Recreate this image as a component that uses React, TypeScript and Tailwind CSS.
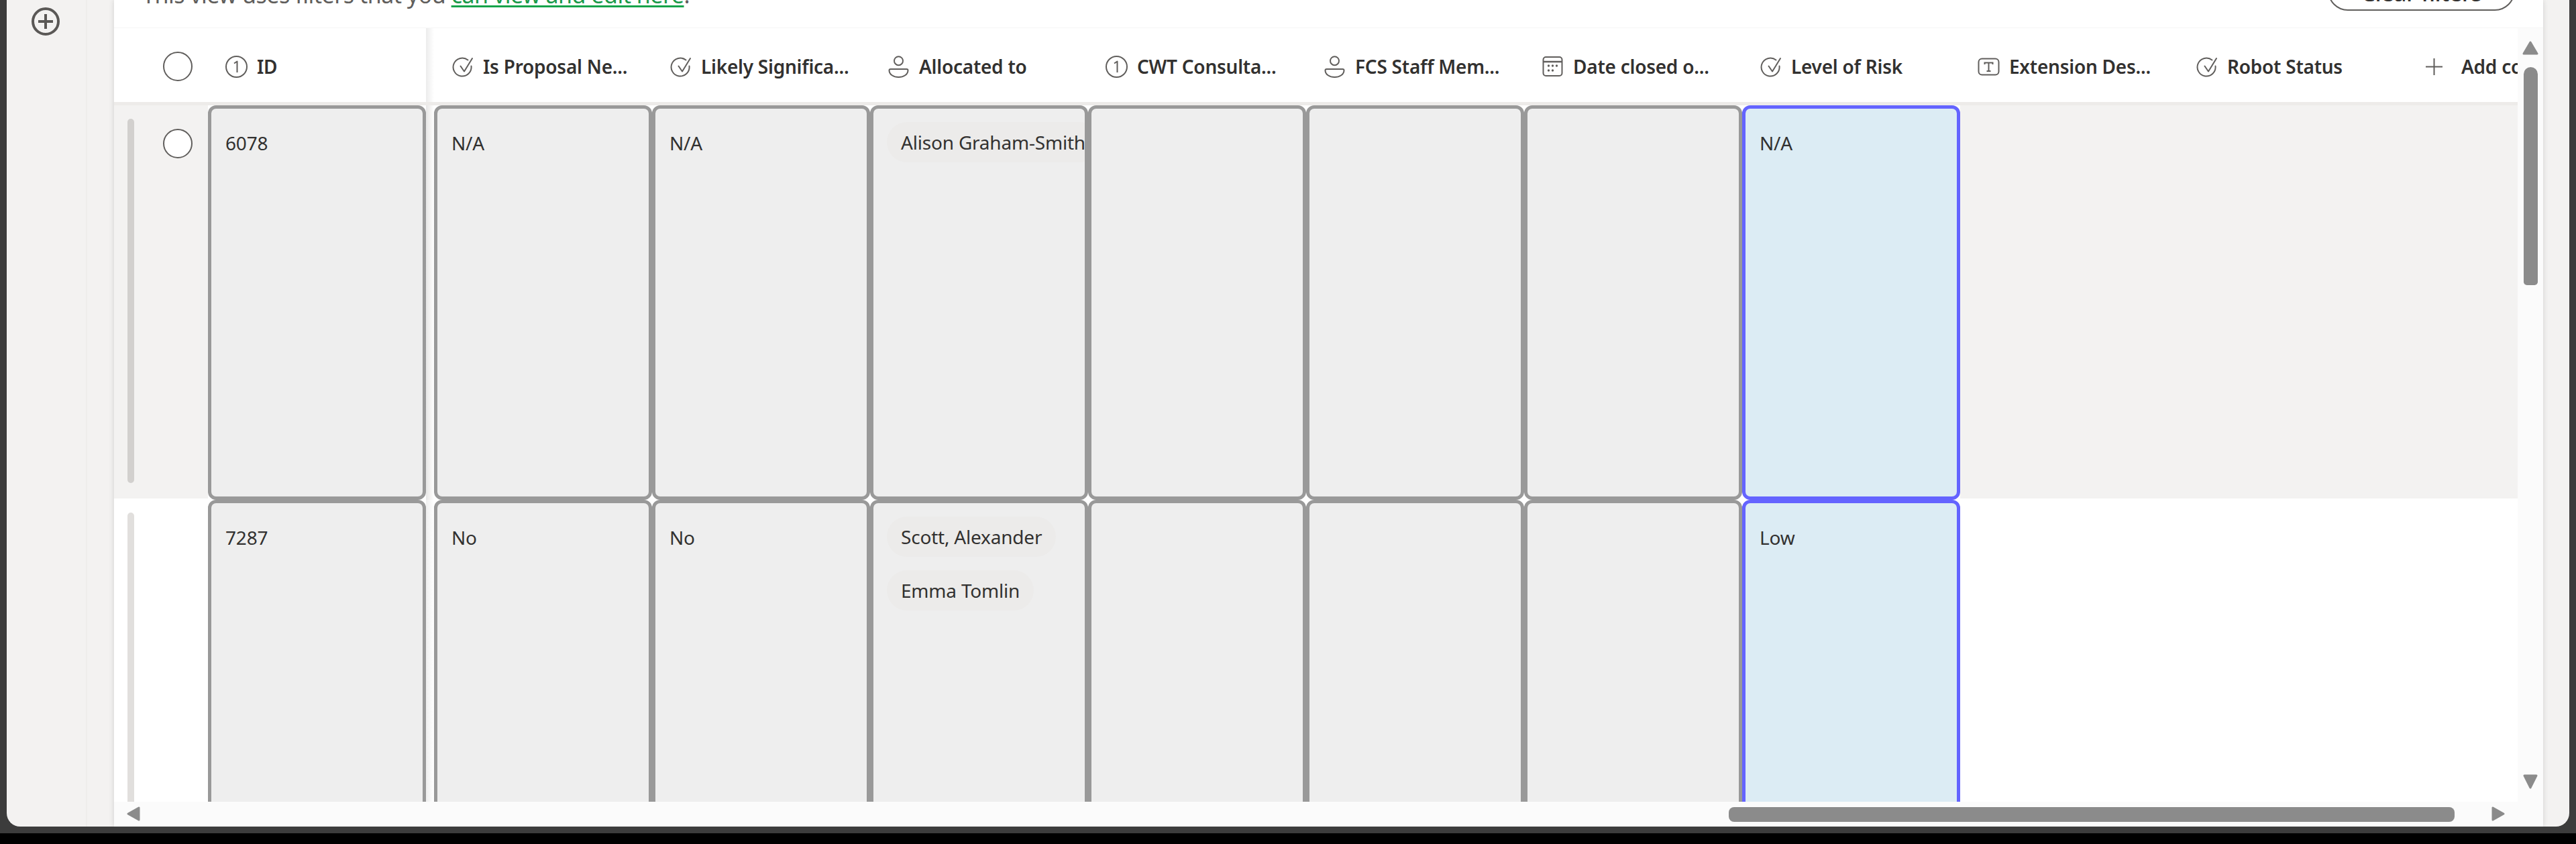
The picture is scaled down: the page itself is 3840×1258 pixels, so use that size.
import React from 'react';

const FONT = "font-['Noto_Sans','Liberation_Sans',sans-serif]";

const NumberIcon = () => (
  <svg width="33" height="33" viewBox="0 0 33 33" fill="none" stroke="#605e5c" strokeWidth="2">
    <circle cx="16.5" cy="16.5" r="15.5" />
    <path d="M13 11.5 L17.5 8.5 V25" strokeLinejoin="round" />
  </svg>
);

const CheckIcon = () => (
  <svg width="33" height="33" viewBox="0 0 33 33" fill="none" stroke="#605e5c" strokeWidth="2">
    <path d="M24.5 6.5 A13.5 13.5 0 1 0 29.5 15.5" strokeLinecap="round" />
    <path d="M13.5 15.5 L19 23.5 L31 4" strokeLinejoin="round" strokeLinecap="round" />
  </svg>
);

const PersonIcon = () => (
  <svg width="33" height="33" viewBox="0 0 33 33" fill="none" stroke="#605e5c" strokeWidth="2">
    <circle cx="16.5" cy="7.7" r="6.5" />
    <path d="M4.5 20 H28.5 Q30.5 20 30.5 22 C30.5 28 24 32 16.5 32 C9 32 2.5 28 2.5 22 Q2.5 20 4.5 20 Z" />
  </svg>
);

const CalendarIcon = () => (
  <svg width="33" height="33" viewBox="0 0 33 33" fill="none" stroke="#605e5c" strokeWidth="2">
    <rect x="2.5" y="2" width="28" height="28" rx="4" />
    <path d="M2.5 9 H30.5" strokeWidth="2.5" />
    <g fill="#605e5c" stroke="none">
      <circle cx="10.5" cy="15" r="1.7" />
      <circle cx="16.5" cy="15" r="1.7" />
      <circle cx="22.5" cy="15" r="1.7" />
      <circle cx="10.5" cy="22" r="1.7" />
      <circle cx="16.5" cy="22" r="1.7" />
    </g>
  </svg>
);

const TextIcon = () => (
  <svg width="33" height="33" viewBox="0 0 33 33" fill="none" stroke="#605e5c" strokeWidth="2">
    <rect x="1.5" y="4.5" width="30" height="24" rx="5" />
    <path d="M10.5 13 V10.5 H22.5 V13 M16.5 10.5 V23 M13.5 23 H19.5" />
  </svg>
);

const PlusThin = () => (
  <svg width="25" height="25" viewBox="0 0 25 25" fill="none" stroke="#605e5c" strokeWidth="2">
    <path d="M12.5 0 V25 M0 12.5 H25" />
  </svg>
);

const Triangle = ({ points }: { points: string }) => (
  <svg width="24" height="24" viewBox="0 0 24 24" fill="#8b8b8b" stroke="#8b8b8b" strokeWidth="3" strokeLinejoin="round">
    <polygon points={points} />
  </svg>
);

const HeaderCell = ({ icon, label }: { icon: React.ReactNode; label: string }) => (
  <div className="w-[325px] shrink-0 h-full flex items-center pl-[26px]">
    <span className="w-[33px] flex justify-center shrink-0">{icon}</span>
    <span className="ml-[14px] text-[28px] font-semibold tracking-[-0.25px] text-[#323130] whitespace-nowrap">{label}</span>
  </div>
);

const Circle = () => <span className="block w-[44px] h-[44px] rounded-full border-2 border-[#605e5c] bg-white" />;

type CellData = { text?: string; pills?: string[]; hot?: boolean };

const Cell = ({ cell }: { cell: CellData }) => (
  <div
    className={
      'w-[325px] shrink-0 h-full rounded-[12px] border-[5px] overflow-hidden text-[28px] leading-[40px] tracking-[-0.2px] text-[#323130] ' +
      (cell.hot ? 'border-[#6464ff] bg-[#dcecf4] ' : 'border-[#999999] bg-[#eeeeee] ') +
      (cell.pills ? 'pl-[20px] pt-[20px]' : 'pl-[21px] pt-[31px]')
    }
  >
    {cell.text}
    {cell.pills && (
      <div className="flex flex-col items-start gap-[20px]">
        {cell.pills.map((p) => (
          <span key={p} className="h-[60px] px-[21px] flex items-center rounded-[30px] bg-[#ecebea] whitespace-nowrap">
            {p}
          </span>
        ))}
      </div>
    )}
  </div>
);

const rows: { shaded: boolean; check: boolean; cells: CellData[] }[] = [
  {
    shaded: true,
    check: true,
    cells: [
      { text: '6078' },
      { text: 'N/A' },
      { text: 'N/A' },
      { pills: ['Alison Graham-Smith'] },
      {},
      {},
      {},
      { text: 'N/A', hot: true },
    ],
  },
  {
    shaded: false,
    check: false,
    cells: [
      { text: '7287' },
      { text: 'No' },
      { text: 'No' },
      { pills: ['Scott, Alexander', 'Emma Tomlin'] },
      {},
      {},
      {},
      { text: 'Low', hot: true },
    ],
  },
];

const columns = [
  { label: 'Is Proposal Ne...', icon: <CheckIcon /> },
  { label: 'Likely Significa...', icon: <CheckIcon /> },
  { label: 'Allocated to', icon: <PersonIcon /> },
  { label: 'CWT Consulta...', icon: <NumberIcon /> },
  { label: 'FCS Staff Mem...', icon: <PersonIcon /> },
  { label: 'Date closed o...', icon: <CalendarIcon /> },
  { label: 'Level of Risk', icon: <CheckIcon /> },
  { label: 'Extension Des...', icon: <TextIcon /> },
  { label: 'Robot Status', icon: <CheckIcon /> },
];

export default function App() {
  return (
    <div className={`${FONT} w-[3840px] h-[1258px] bg-black overflow-hidden`}>
      <div className="h-[1242px] bg-[#3c3c3c] px-[10px] pb-[10px]">
        <div className="h-[1232px] flex rounded-b-[20px] overflow-hidden bg-[#f3f2f1]">
          {/* left rail */}
          <div className="w-[160px] shrink-0">
            <div className="w-[120px] h-full border-r-2 border-[#eeedeb] pl-[37px] pt-[11px]">
              <span className="flex w-[42px] h-[42px] rounded-full border-[4px] border-[#5a5856] items-center justify-center">
                <svg width="22" height="22" viewBox="0 0 22 22" stroke="#5a5856" strokeWidth="4">
                  <path d="M11 0 V22 M0 11 H22" />
                </svg>
              </span>
            </div>
          </div>

          {/* main panel */}
          <div className="w-[3621px] shrink-0 bg-white flex flex-col shadow-[0_0_8px_rgba(0,0,0,0.14)]">
            <div className="h-[42px] shrink-0 flex items-start justify-between overflow-hidden border-b border-[#f6f6f6]">
              <p className="pl-[42px] -mt-[28px] text-[34px] leading-[40px] tracking-[-0.5px] text-[#605e5c] whitespace-nowrap">
                This view uses filters that you <span className="text-[#1a9a4a] underline decoration-[#16a34a] decoration-[3px] underline-offset-[3px]">can view and edit here</span>.
              </p>
              <button className="w-[279px] h-[60px] -mt-[44px] mr-[42px] pt-[6px] rounded-[30px] border-2 border-[#605e5c] bg-white text-[34px] leading-[40px] font-medium tracking-[-0.5px] text-[#323130]">
                Clear filters
              </button>
            </div>

            <div className="flex-1 min-h-0 flex">
              <div className="w-[3583px] shrink-0 overflow-hidden">
                {/* header */}
                <div className="h-[115px] pt-[4px] border-b-[5px] border-[#edebe9] flex">
                  <div className="w-[140px] shrink-0 pl-[73px] flex items-center">
                    <Circle />
                  </div>
                  <HeaderCell icon={<NumberIcon />} label="ID" />
                  <div className="w-[12px] shrink-0 -mt-[4px] bg-gradient-to-r from-[#ececec] to-white" />
                  {columns.map((c) => (
                    <HeaderCell key={c.label} icon={c.icon} label={c.label} />
                  ))}
                  <div className="w-[325px] shrink-0 h-full flex items-center pl-[44px]">
                    <PlusThin />
                    <span className="ml-[28px] text-[28px] font-semibold tracking-[-0.25px] text-[#323130] whitespace-nowrap">Add column</span>
                  </div>
                </div>

                {/* rows */}
                {rows.map((row) => (
                  <div key={row.cells[0].text} className="h-[588px] flex bg-white">
                    <div
                      className={
                        'w-[140px] shrink-0 mb-[2px] pl-[20px] flex items-stretch ' +
                        (row.shaded ? 'bg-[#f3f2f1] pt-[20px] pb-[23px]' : 'bg-white pt-[19px] pb-[23px]')
                      }
                    >
                      <span className={'w-[10px] rounded-full ' + (row.shaded ? 'bg-[#d2d0ce]' : 'bg-[#e1dfdd]')} />
                      {row.check && (
                        <span className="ml-[43px] mt-[15px]">
                          <Circle />
                        </span>
                      )}
                    </div>
                    <Cell cell={row.cells[0]} />
                    <div className={'w-[12px] shrink-0 bg-gradient-to-r to-white ' + (row.shaded ? 'from-[#e6e6e6] via-[#f3f2f1]' : 'from-[#eeeeee]')} />
                    {row.cells.slice(1).map((c, i) => (
                      <Cell key={i} cell={c} />
                    ))}
                    <div className={'flex-1 mb-[2px] ' + (row.shaded ? 'bg-[#f3f2f1]' : 'bg-white')} />
                  </div>
                ))}
              </div>

              {/* vertical scrollbar */}
              <div className="w-[38px] shrink-0 bg-[#fbfbfb] flex flex-col items-center pt-[18px] pb-[18px]">
                <Triangle points="12,3 22,20 2,20" />
                <span className="w-[21px] h-[325px] mt-[16px] rounded-t-[11px] rounded-b-[5px] bg-[#8b8b8b]" />
                <span className="mt-auto">
                  <Triangle points="3,3 21,3 12,21" />
                </span>
              </div>
            </div>

            {/* horizontal scrollbar */}
            <div className="h-[37px] shrink-0 bg-[#fbfbfb] flex items-start pl-[17px] pt-[6px]">
              <Triangle points="20,3 20,21 4,12" />
              <span className="ml-[2366px] mt-[2px] w-[1082px] h-[22px] rounded-[8px] bg-[#8b8b8b]" />
              <span className="ml-[53px]">
                <Triangle points="4,3 4,21 20,12" />
              </span>
            </div>
          </div>

          <div className="flex-1" />
        </div>
      </div>
    </div>
  );
}
